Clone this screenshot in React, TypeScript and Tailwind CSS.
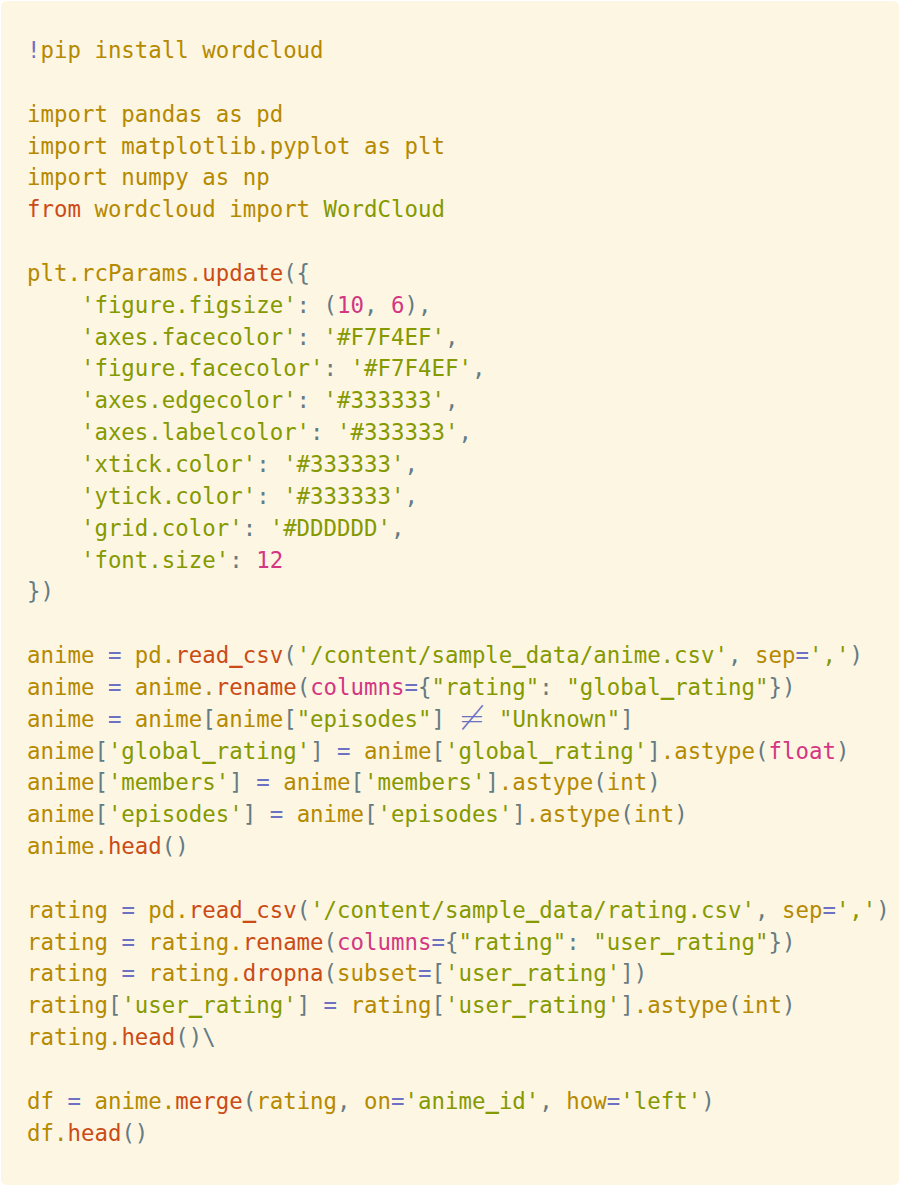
import React from 'react';

type Tok = [string, string];

// token colours (solarized light)
const C: Record<string, string> = {
  y: 'text-[#b58900]',
  o: 'text-[#cb4b16]',
  g: 'text-[#859900]',
  p: 'text-[#657b83]',
  v: 'text-[#6c71c4]',
  m: 'text-[#d33682]',
};

const lines: Tok[][] = [
  [['v', '!'], ['y', 'pip install wordcloud']],
  [],
  [['y', 'import pandas as pd']],
  [['y', 'import matplotlib.pyplot as plt']],
  [['y', 'import numpy as np']],
  [['o', 'from'], ['y', ' wordcloud import '], ['g', 'WordCloud']],
  [],
  [['y', 'plt.rcParams.'], ['o', 'update'], ['p', '({']],
  [['g', "    'figure.figsize'"], ['p', ': ('], ['m', '10'], ['p', ', '], ['m', '6'], ['p', '),']],
  [['g', "    'axes.facecolor'"], ['p', ': '], ['g', "'#F7F4EF'"], ['p', ',']],
  [['g', "    'figure.facecolor'"], ['p', ': '], ['g', "'#F7F4EF'"], ['p', ',']],
  [['g', "    'axes.edgecolor'"], ['p', ': '], ['g', "'#333333'"], ['p', ',']],
  [['g', "    'axes.labelcolor'"], ['p', ': '], ['g', "'#333333'"], ['p', ',']],
  [['g', "    'xtick.color'"], ['p', ': '], ['g', "'#333333'"], ['p', ',']],
  [['g', "    'ytick.color'"], ['p', ': '], ['g', "'#333333'"], ['p', ',']],
  [['g', "    'grid.color'"], ['p', ': '], ['g', "'#DDDDDD'"], ['p', ',']],
  [['g', "    'font.size'"], ['p', ': '], ['m', '12']],
  [['p', '})']],
  [],
  [['y', 'anime '], ['v', '='], ['y', ' pd.'], ['o', 'read_csv'], ['p', '('], ['g', "'/content/sample_data/anime.csv'"], ['p', ', '], ['y', 'sep'], ['v', '='], ['g', "','"], ['p', ')']],
  [['y', 'anime '], ['v', '='], ['y', ' anime.'], ['o', 'rename'], ['p', '('], ['m', 'columns'], ['v', '='], ['p', '{'], ['g', '"rating"'], ['p', ': '], ['g', '"global_rating"'], ['p', '})']],
  [['y', 'anime '], ['v', '='], ['y', ' anime'], ['p', '['], ['y', 'anime'], ['p', '['], ['g', '"episodes"'], ['p', '] '], ['v', '≠'], ['p', ' '], ['g', '"Unknown"'], ['p', ']']],
  [['y', 'anime'], ['p', '['], ['g', "'global_rating'"], ['p', '] '], ['v', '='], ['y', ' anime'], ['p', '['], ['g', "'global_rating'"], ['p', ']'], ['y', '.astype'], ['p', '('], ['m', 'float'], ['p', ')']],
  [['y', 'anime'], ['p', '['], ['g', "'members'"], ['p', '] '], ['v', '='], ['y', ' anime'], ['p', '['], ['g', "'members'"], ['p', ']'], ['y', '.astype'], ['p', '('], ['y', 'int'], ['p', ')']],
  [['y', 'anime'], ['p', '['], ['g', "'episodes'"], ['p', '] '], ['v', '='], ['y', ' anime'], ['p', '['], ['g', "'episodes'"], ['p', ']'], ['y', '.astype'], ['p', '('], ['y', 'int'], ['p', ')']],
  [['y', 'anime.'], ['o', 'head'], ['p', '()']],
  [],
  [['y', 'rating '], ['v', '='], ['y', ' pd.'], ['o', 'read_csv'], ['p', '('], ['g', "'/content/sample_data/rating.csv'"], ['p', ', '], ['y', 'sep'], ['v', '='], ['g', "','"], ['p', ')']],
  [['y', 'rating '], ['v', '='], ['y', ' rating.'], ['o', 'rename'], ['p', '('], ['m', 'columns'], ['v', '='], ['p', '{'], ['g', '"rating"'], ['p', ': '], ['g', '"user_rating"'], ['p', '})']],
  [['y', 'rating '], ['v', '='], ['y', ' rating.'], ['o', 'dropna'], ['p', '('], ['y', 'subset'], ['v', '='], ['p', '['], ['g', "'user_rating'"], ['p', '])']],
  [['y', 'rating'], ['p', '['], ['g', "'user_rating'"], ['p', '] '], ['v', '='], ['y', ' rating'], ['p', '['], ['g', "'user_rating'"], ['p', ']'], ['y', '.astype'], ['p', '('], ['y', 'int'], ['p', ')']],
  [['y', 'rating.'], ['o', 'head'], ['p', '()\\']],
  [],
  [['y', 'df '], ['v', '='], ['y', ' anime.'], ['o', 'merge'], ['p', '('], ['y', 'rating'], ['p', ', '], ['y', 'on'], ['v', '='], ['g', "'anime_id'"], ['p', ', '], ['y', 'how'], ['v', '='], ['g', "'left'"], ['p', ')']],
  [['y', 'df.'], ['o', 'head'], ['p', '()']],
];

// the thin DejaVu underscore nearly vanishes at this size, so bold it
function Text({ t }: { t: string }) {
  const parts = t.split('_');
  return (
    <>
      {parts.map((s, i) => (
        <React.Fragment key={i}>
          {i > 0 && <span className="font-bold">_</span>}
          {s}
        </React.Fragment>
      ))}
    </>
  );
}

export default function App() {
  return (
    <div className="w-[900px] h-[1186px] bg-white p-px">
      <div className="h-full rounded-md bg-[#fdf6e3] pl-[26px] pt-[33px]">
        <pre className="font-['DejaVu_Sans_Mono',monospace] text-[22.4px] leading-[32px] whitespace-pre">
          {lines.map((line, i) => (
            <div key={i} className="h-[31.85px]">
              {line.map(([k, t], j) =>
                t === '≠' ? (
                  <span key={j} className="inline-block w-[27px] text-center align-top">
                    <span className={`font-['DejaVu_Sans',sans-serif] text-[32px] font-light leading-[31px] ${C[k]}`}>≠</span>
                  </span>
                ) : (
                  <span key={j} className={C[k]}>
                    <Text t={t} />
                  </span>
                )
              )}
            </div>
          ))}
        </pre>
      </div>
    </div>
  );
}
